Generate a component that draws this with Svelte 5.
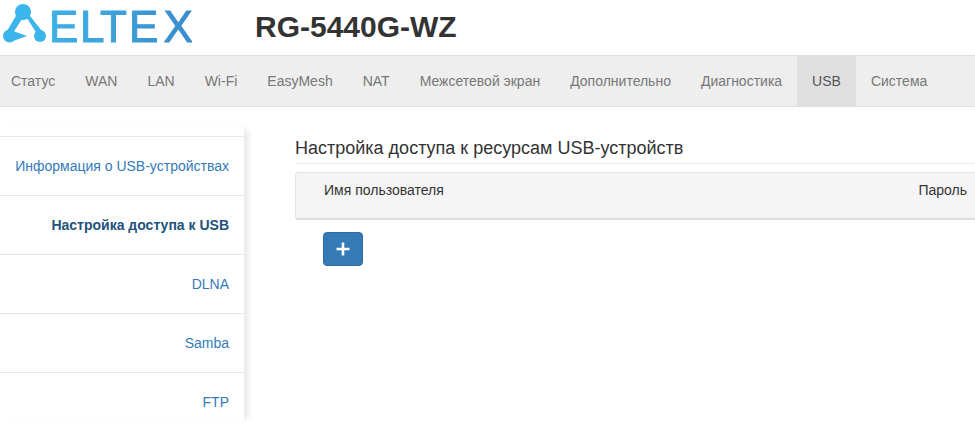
<script lang="ts">
  const tabs = ["Статус", "WAN", "LAN", "Wi-Fi", "EasyMesh", "NAT", "Межсетевой экран", "Дополнительно", "Диагностика", "USB", "Система"];
  const activeTab = "USB";
  const links = ["Информация о USB-устройствах", "Настройка доступа к USB", "DLNA", "Samba", "FTP"];
  const activeLink = "Настройка доступа к USB";
</script>

<div class="page">
  <header class="header">
    <svg class="logo" width="192" height="55" viewBox="0 0 192 55" aria-label="ELTEX">
      <defs>
        <linearGradient id="logo-fill" gradientUnits="userSpaceOnUse" x1="50" y1="0" x2="192" y2="0">
          <stop offset="0" stop-color="#3fb0e6" />
          <stop offset="1" stop-color="#3a8ccc" />
        </linearGradient>
      </defs>
      <g fill="#3cb5ec">
        <path d="M17 14 L22 19 L13 33 L7 31 Z" />
        <path d="M27 18 L30 16 L42 31 L37 34 Z" />
        <path d="M13 31 L27 36 L13 41 Z" />
        <circle cx="23" cy="12" r="8" />
        <circle cx="9.5" cy="36" r="6.5" />
        <circle cx="40" cy="36" r="6" />
      </g>
      <text class="logo-text" x="49 80 100 129 163.5" y="41.5" fill="url(#logo-fill)" stroke="url(#logo-fill)">ELTEX</text>
    </svg>
    <h1 class="model">RG-5440G-WZ</h1>
  </header>

  <nav class="tabs">
    {#each tabs as tab}
      <span class="tab" class:active={tab === activeTab}>{tab}</span>
    {/each}
  </nav>

  <div class="main">
    <aside class="sidebar">
      {#each links as link}
        <div class="side-item" class:current={link === activeLink}>{link}</div>
      {/each}
    </aside>

    <section class="content">
      <h2 class="title">Настройка доступа к ресурсам USB-устройств</h2>
      <div class="well">
        <span>Имя пользователя</span>
        <span>Пароль</span>
      </div>
      <button class="add" aria-label="Добавить">
        <svg width="14" height="14" viewBox="0 0 14 14"><path d="M7 0.5v13M0.5 7h13" stroke="#fff" stroke-width="2.6" /></svg>
      </button>
    </section>
  </div>
</div>

<style>
  :global(body) {
    margin: 0;
    background: #fff;
    overflow: hidden;
  }

  .page {
    width: 975px;
    height: 431px;
    overflow: hidden;
    font-family: "Liberation Sans", Arial, sans-serif;
    font-size: 14px;
    line-height: 20px;
    color: #333;
  }

  .header {
    display: flex;
    align-items: center;
    height: 55px;
  }

  .logo {
    flex: none;
    filter: blur(0.5px);
  }

  .logo-text {
    font-family: "Liberation Sans", sans-serif;
    font-size: 44px;
    stroke-width: 1px;
    stroke-linejoin: round;
  }

  .model {
    margin: 0 0 2px 63px;
    font-size: 30px;
    line-height: 33px;
    font-weight: 700;
  }

  .tabs {
    display: flex;
    height: 50px;
    background: #eee;
    border-top: 1px solid #ddd;
    border-bottom: 1px solid #ddd;
  }

  .tab {
    padding: 15px;
    color: #777;
  }

  .tab:first-child {
    padding-left: 11px;
  }

  .tab.active {
    background: #e0e0e0;
    color: #555;
  }

  .main {
    display: flex;
  }

  .sidebar {
    flex: none;
    box-sizing: border-box;
    width: 245px;
    height: 294px;
    margin-top: 20px;
    padding-top: 9px;
    border-right: 1px solid #eee;
    box-shadow: 6px 0 6px -3px rgba(0, 0, 0, 0.1);
  }

  .side-item {
    box-sizing: border-box;
    height: 59px;
    padding: 19px 15px 0 0;
    border-top: 1px solid #e7e7e7;
    text-align: right;
    color: #337ab7;
  }

  .side-item.current {
    font-weight: 700;
    color: #23527c;
  }

  .content {
    flex: 1;
    min-width: 0;
    padding: 30px 0 0 50px;
  }

  .title {
    margin: 0 0 8px;
    padding-bottom: 3px;
    border-bottom: 1px solid #eee;
    font-size: 18px;
    line-height: 23px;
    font-weight: 500;
  }

  .well {
    display: flex;
    justify-content: space-between;
    box-sizing: border-box;
    height: 48px;
    padding: 7px 8px 0 28px;
    background: #f5f5f5;
    border: 1px solid #e3e3e3;
    border-bottom: 2px solid #ddd;
    border-right-width: 0;
    border-radius: 3px 0 0 3px;
  }

  .add {
    display: flex;
    align-items: center;
    justify-content: center;
    width: 40px;
    height: 34px;
    margin: 12px 0 0 28px;
    padding: 0;
    background: #337ab7;
    border: 1px solid #2e6da4;
    border-radius: 4px;
  }
</style>
